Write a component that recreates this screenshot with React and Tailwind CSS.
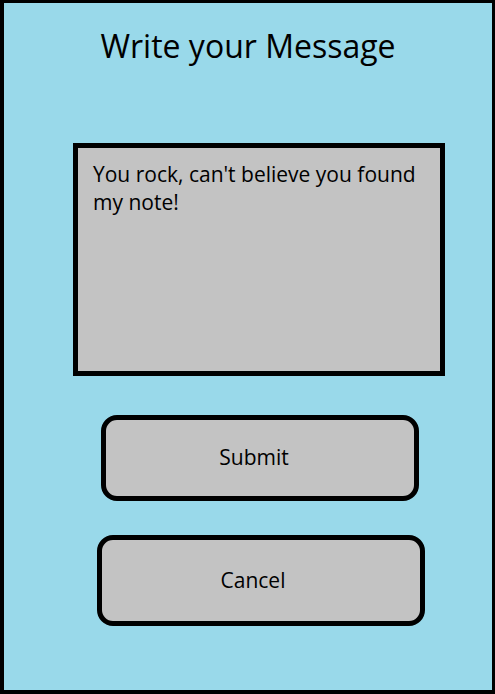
export default function App() {
  return (
    <div
      className="flex h-[694px] w-[495px] flex-col border-b-4 border-l-4 border-r-[3px] border-t-[3px] border-black bg-[#99d9ea] text-black"
      style={{ fontFamily: '"Open Sans", sans-serif' }}
    >
      <h1 className="mt-[23px] text-center text-[32px] leading-[40px]">Write your Message</h1>

      <div className="ml-[69px] mt-[77px] h-[233px] w-[372px] border-[5px] border-black bg-[#c3c3c3] px-[15px] pt-[12px] text-[21px] leading-[28px]">
        You rock, can't believe you found my note!
      </div>

      <button className="ml-[97px] mt-[39px] flex h-[86px] w-[318px] items-center justify-center rounded-[16px] border-[5px] border-black bg-[#c3c3c3] pr-[12px] text-[21px]">
        Submit
      </button>

      <button className="ml-[93px] mt-[34px] flex h-[91px] w-[328px] items-center justify-center rounded-[16px] border-[5px] border-black bg-[#c3c3c3] pr-[16px] text-[21px]">
        Cancel
      </button>
    </div>
  );
}
